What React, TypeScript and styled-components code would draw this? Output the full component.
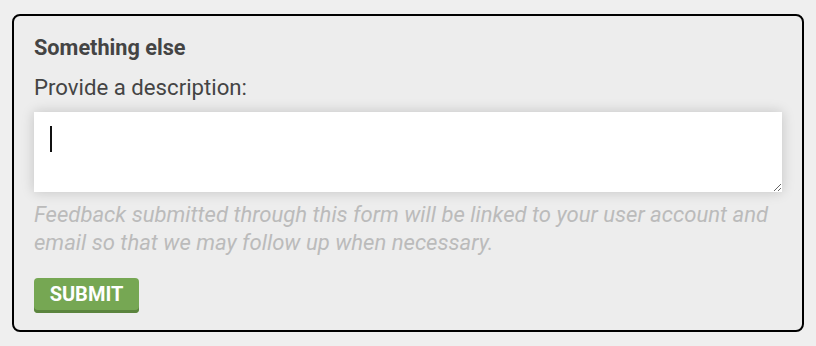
import { useState } from 'react';
import styled, { createGlobalStyle } from 'styled-components';

const GlobalStyle = createGlobalStyle`
  html, body {
    margin: 0;
    padding: 0;
    background: #efefef;
    font-family: Roboto, "Liberation Sans", sans-serif;
  }
`;

const Page = styled.div`
  padding: 14px 12px;
`;

const Panel = styled.form`
  box-sizing: border-box;
  width: 792px;
  height: 318px;
  border: 2px solid #000;
  border-radius: 8px;
  background: #ededed;
  padding: 20px 20px 0 20px;
  color: #444;
`;

const Title = styled.h3`
  margin: 0;
  font-size: 21.7px;
  font-weight: 700;
  line-height: 24px;
`;

const Label = styled.label`
  display: block;
  margin-top: 14px;
  font-size: 22.2px;
  line-height: 26px;
`;

const Field = styled.div`
  position: relative;
  margin-top: 12px;
`;

const TextArea = styled.textarea`
  display: block;
  box-sizing: border-box;
  width: 748px;
  height: 80px;
  padding: 14px 16px;
  border: none;
  outline: none;
  background: #fff;
  box-shadow: 0 0 12px rgba(0, 0, 0, 0.18);
  font-family: Roboto, "Liberation Sans", sans-serif;
  font-size: 20px;
  line-height: 26px;
  color: #222;
  caret-color: #111;
  resize: both;
`;

const Caret = styled.span`
  position: absolute;
  left: 16px;
  top: 14px;
  width: 2px;
  height: 26px;
  background: #111;
  pointer-events: none;
`;

const Notice = styled.p`
  margin: 8px 0 0 0;
  font-size: 22.1px;
  font-style: italic;
  line-height: 28px;
  color: #bbb;
`;

const SubmitButton = styled.button`
  display: block;
  box-sizing: border-box;
  margin-top: 22px;
  width: 105px;
  height: 35px;
  padding: 0 0 3px 0;
  border: none;
  border-radius: 4px;
  background: #76a753;
  box-shadow: inset 0 -3px 0 #5b843e;
  color: #fff;
  font-family: Roboto, "Liberation Sans", sans-serif;
  font-size: 20px;
  font-weight: 700;
  cursor: pointer;
`;

export default function App() {
  const [text, setText] = useState('');
  return (
    <>
      <GlobalStyle />
      <Page>
        <Panel onSubmit={e => e.preventDefault()}>
          <Title>Something else</Title>
          <Label htmlFor="description">Provide a description:</Label>
          <Field>
            <TextArea
              id="description"
              autoFocus
              value={text}
              onChange={e => setText(e.target.value)}
            />
            {text === '' && <Caret />}
          </Field>
          <Notice>
            Feedback submitted through this form will be linked to your user account and
            email so that we may follow up when necessary.
          </Notice>
          <SubmitButton type="submit">SUBMIT</SubmitButton>
        </Panel>
      </Page>
    </>
  );
}
